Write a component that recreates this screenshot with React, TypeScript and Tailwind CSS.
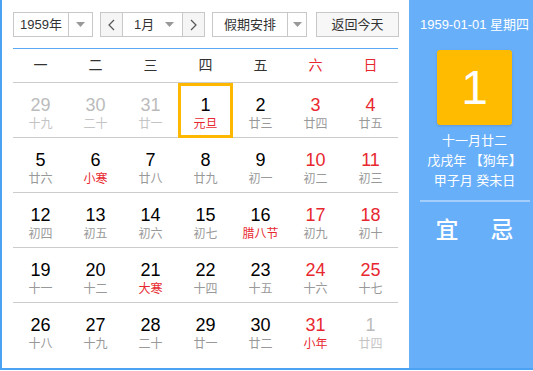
import React from "react";

type Day = { d: number; l: string; other?: boolean; red?: boolean; lred?: boolean; sel?: boolean };

const weeks: Day[][] = [
  [
    { d: 29, l: "十九", other: true },
    { d: 30, l: "二十", other: true },
    { d: 31, l: "廿一", other: true },
    { d: 1, l: "元旦", lred: true, sel: true },
    { d: 2, l: "廿三" },
    { d: 3, l: "廿四", red: true },
    { d: 4, l: "廿五", red: true },
  ],
  [
    { d: 5, l: "廿六" },
    { d: 6, l: "小寒", lred: true },
    { d: 7, l: "廿八" },
    { d: 8, l: "廿九" },
    { d: 9, l: "初一" },
    { d: 10, l: "初二", red: true },
    { d: 11, l: "初三", red: true },
  ],
  [
    { d: 12, l: "初四" },
    { d: 13, l: "初五" },
    { d: 14, l: "初六" },
    { d: 15, l: "初七" },
    { d: 16, l: "腊八节", lred: true },
    { d: 17, l: "初九", red: true },
    { d: 18, l: "初十", red: true },
  ],
  [
    { d: 19, l: "十一" },
    { d: 20, l: "十二" },
    { d: 21, l: "大寒", lred: true },
    { d: 22, l: "十四" },
    { d: 23, l: "十五" },
    { d: 24, l: "十六", red: true },
    { d: 25, l: "十七", red: true },
  ],
  [
    { d: 26, l: "十八" },
    { d: 27, l: "十九" },
    { d: 28, l: "二十" },
    { d: 29, l: "廿一" },
    { d: 30, l: "廿二" },
    { d: 31, l: "小年", red: true, lred: true },
    { d: 1, l: "廿四", other: true },
  ],
];

const heads = ["一", "二", "三", "四", "五", "六", "日"];

const Caret = () => (
  <svg width="9" height="5" viewBox="0 0 9 5">
    <path d="M0 0h9L4.5 5z" fill="#999" />
  </svg>
);

const Chevron = ({ dir }: { dir: "l" | "r" }) => (
  <svg width="7" height="12" viewBox="0 0 7 12">
    <path d={dir === "l" ? "M6 1L1 6l5 5" : "M1 1l5 5-5 5"} fill="none" stroke="#555" strokeWidth="1.2" />
  </svg>
);

function Cell({ day }: { day: Day }) {
  const num = day.other ? "text-[#bbbbbb]" : day.red ? "text-[#e8282f]" : "text-black";
  const lun = day.other ? "text-[#c4c4c4]" : day.lred ? "text-[#e8282f]" : "text-[#999999]";
  return (
    <div className="relative flex flex-col items-center">
      {day.sel && (
        <div className="absolute left-0 top-0 h-[55px] w-[55px] border-[3px] border-[#ffb800]" />
      )}
      <div className={`mt-[12px] text-[18px] leading-[20px] font-['Liberation_Sans',sans-serif] ${num}`}>
        {day.d}
      </div>
      <div className={`mt-[2px] text-[12px] leading-[14px] ${lun}`}>{day.l}</div>
    </div>
  );
}

export default function App() {
  return (
    <div className="flex h-[370px] w-[533px] border-b-2 border-l-2 border-[#4ca3f4] bg-white font-['Liberation_Sans','Noto_Sans_CJK_SC',sans-serif]">
      <div className="w-[407px] pl-[11px] pt-[12px]">
        <div className="flex h-[25px] items-stretch text-[13px] text-[#333]">
          <div className="flex w-[80px] border border-[#c8c8c8]">
            <div className="flex w-[55px] items-center justify-center border-r border-[#c8c8c8]">1959年</div>
            <div className="flex flex-1 items-center justify-center"><Caret /></div>
          </div>
          <div className="ml-[7px] flex w-[105px] border border-[#c8c8c8]">
            <div className="flex w-[22px] items-center justify-center border-r border-[#c8c8c8] bg-[#f5f5f5]"><Chevron dir="l" /></div>
            <div className="flex flex-1 items-center justify-between pl-[11px] pr-[8px]">
              <span>1月</span>
              <Caret />
            </div>
            <div className="flex w-[22px] items-center justify-center border-l border-[#c8c8c8] bg-[#f5f5f5]"><Chevron dir="r" /></div>
          </div>
          <div className="ml-[7px] flex w-[95px] border border-[#c8c8c8]">
            <div className="flex w-[75px] items-center justify-center border-r border-[#c8c8c8]">假期安排</div>
            <div className="flex flex-1 items-center justify-center"><Caret /></div>
          </div>
          <div className="ml-[9px] flex w-[83px] items-center justify-center border border-[#c8c8c8] bg-[#f7f7f7]">返回今天</div>
        </div>
        <div className="mt-[11px] w-[385px] border-t border-[#5aa9f5]">
          <div className="grid h-[33px] grid-cols-7 items-center text-[14px] text-[#333]">
            {heads.map((h, i) => (
              <div key={h} className={`text-center ${i > 4 ? "text-[#e8282f]" : ""}`}>{h}</div>
            ))}
          </div>
          {weeks.map((w, wi) => (
            <div key={wi} className="grid h-[55px] grid-cols-7 border-t border-[#cccccc]">
              {w.map((d, di) => (
                <Cell key={di} day={d} />
              ))}
            </div>
          ))}
        </div>
      </div>
      <div className="flex flex-1 flex-col items-center bg-[#68affa] pl-[7px] text-white">
        <div className="mt-[16px] text-[13px] leading-[18px]">1959-01-01 星期四</div>
        <div className="mt-[16px] flex h-[75px] w-[75px] items-center justify-center rounded-[3px] bg-[#ffbb00] text-[48px] font-['Liberation_Sans',sans-serif] shadow-[0_1px_3px_rgba(0,0,0,0.15)]">
          1
        </div>
        <div className="mt-[6px] text-[13px] leading-[20px]">十一月廿二</div>
        <div className="text-[13px] leading-[20px]">戊戌年 【狗年】</div>
        <div className="text-[13px] leading-[20px]">甲子月 癸未日</div>
        <div className="mt-[9px] h-[2px] w-[110px] bg-white/40" />
        <div className="mt-[14px] flex w-[110px] justify-between px-[16px] text-[23px] font-medium leading-[28px]">
          <span>宜</span>
          <span>忌</span>
        </div>
      </div>
    </div>
  );
}
